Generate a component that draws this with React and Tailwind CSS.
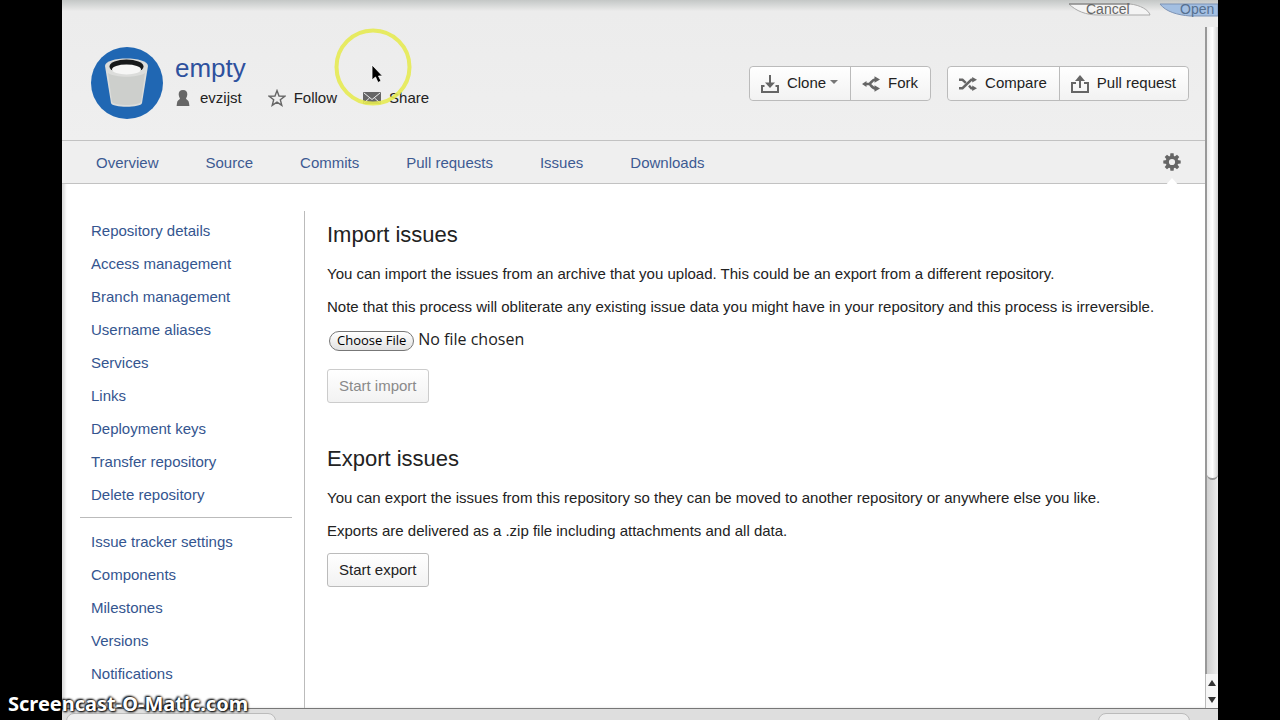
const navLinks = ["Overview", "Source", "Commits", "Pull requests", "Issues", "Downloads"];

const adminLinks = [
  "Repository details",
  "Access management",
  "Branch management",
  "Username aliases",
  "Services",
  "Links",
  "Deployment keys",
  "Transfer repository",
  "Delete repository",
];

const issueLinks = [
  "Issue tracker settings",
  "Components",
  "Milestones",
  "Versions",
  "Notifications",
];

// ─── Icons ─────────────────────────────────────────────────────────────────

function BucketAvatar() {
  return (
    <svg viewBox="0 0 72 72" className="size-[72px] shrink-0" aria-hidden="true">
      <circle cx="36" cy="36" r="36" fill="#2067b3" />
      <path
        d="M14 19 C14 9 57 9 57 19 L51 56 C50 61 21 61 20 56 Z"
        fill="#dcdddb"
      />
      <path d="M17 26 L21 55 C24 59 47 59 50 55 L54 26 C46 31 25 31 17 26 Z" fill="#cdcfcc" />
      <ellipse cx="35.5" cy="19.5" rx="17" ry="7" fill="#17191a" />
      <ellipse cx="35.5" cy="22.5" rx="14.5" ry="5" fill="#f6f6f5" />
    </svg>
  );
}

function UserIcon() {
  return (
    <svg viewBox="0 0 16 18" className="h-[18px] w-4" fill="#666" aria-hidden="true">
      <path d="M8 1 C11 1 12.5 3 12.3 5.5 C12.2 7.5 11.4 8.6 11 9.6 C11.6 11 13.8 11.5 14 14 L14.4 17 H1.6 L2 14 C2.2 11.5 4.4 11 5 9.6 C4.6 8.6 3.8 7.5 3.7 5.5 C3.5 3 5 1 8 1 Z" />
    </svg>
  );
}

function StarIcon() {
  return (
    <svg viewBox="0 0 18 18" className="size-[18px]" fill="none" stroke="#666" strokeWidth="1.4" aria-hidden="true">
      <path d="M9 1.6 L11 7 L16.8 7.2 L12.3 10.8 L13.8 16.4 L9 13.2 L4.2 16.4 L5.7 10.8 L1.2 7.2 L7 7 Z" />
    </svg>
  );
}

function MailIcon() {
  return (
    <svg viewBox="0 0 18 12" className="h-3 w-[18px]" aria-hidden="true">
      <rect width="18" height="12" rx="1" fill="#666" />
      <path d="M1 1 L9 7.5 L17 1 M1 11 L6.5 6 M17 11 L11.5 6" stroke="#eee" strokeWidth="1" fill="none" />
    </svg>
  );
}

function CloneIcon() {
  return (
    <svg viewBox="0 0 18 18" className="size-[18px]" fill="none" stroke="#666" strokeWidth="2" aria-hidden="true">
      <path d="M3.5 11 H1 V17 H17 V11 H14.5 M9 0 V10" />
      <path d="M4 7.5 H14 L9 13 Z" fill="#666" stroke="none" />
    </svg>
  );
}

function ForkIcon() {
  return (
    <svg viewBox="0 0 18 16" className="h-4 w-[18px]" fill="none" stroke="#666" strokeWidth="2.6" aria-hidden="true">
      <path d="M3 8 H7 C9 8 9.5 3.5 14 3.5 M7 8 C9 8 9.5 12.5 14 12.5" />
      <path d="M0 8 L4.5 5 V11 Z M18 3.5 L12.5 0.3 V6.7 Z M18 12.5 L12.5 9.3 V15.7 Z" fill="#666" stroke="none" />
    </svg>
  );
}

function CompareIcon() {
  return (
    <svg viewBox="0 0 18 14" className="h-3.5 w-[18px]" fill="none" stroke="#666" strokeWidth="2.4" aria-hidden="true">
      <path d="M0 2.8 H3.5 L6.8 5.8 M10 8.6 L12.3 11.2 H14 M0 11.2 H3.5 L12.3 2.8 H14" />
      <path d="M18 2.8 L13.2 0 V5.6 Z M18 11.2 L13.2 8.4 V14 Z" fill="#666" stroke="none" />
    </svg>
  );
}

function PullRequestIcon() {
  return (
    <svg viewBox="0 0 18 18" className="size-[18px]" fill="none" stroke="#666" strokeWidth="2" aria-hidden="true">
      <path d="M5 8 H1 V17 H17 V8 H13 M9 4 V13" />
      <path d="M4 6 H14 L9 0 Z" fill="#666" stroke="none" />
    </svg>
  );
}

function GearIcon() {
  const teeth = [0, 45, 90, 135, 180, 225, 270, 315];
  return (
    <svg viewBox="0 0 18 18" className="size-[18px]" aria-hidden="true">
      {teeth.map((angle) => (
        <path key={angle} d="M7 4 L7.4 0.3 H10.6 L11 4 Z" fill="#666" transform={`rotate(${angle} 9 9)`} />
      ))}
      <circle cx="9" cy="9" r="4.7" fill="none" stroke="#666" strokeWidth="3.2" />
    </svg>
  );
}

// ─── Reusable Components ───────────────────────────────────────────────────

function ToolbarButton({ icon, label, caret }) {
  return (
    <button className="flex h-[33px] items-center gap-2 border-l border-[#bbb] bg-linear-to-b from-white to-[#f2f2f2] pr-3 pl-[11px] first:rounded-l first:border-l-0 last:rounded-r">
      {icon}
      {label}
      {caret && <span className="-ml-1 mb-1 border-x-4 border-t-4 border-x-transparent border-t-[#777]" />}
    </button>
  );
}

function ButtonGroup({ children }) {
  return <div className="flex rounded border border-[#bbb]">{children}</div>;
}

function FormButton({ children, disabled }) {
  return (
    <button
      disabled={disabled}
      className="h-[34px] rounded-[3px] border border-[#bbb] bg-linear-to-b from-white to-[#f2f2f2] px-[11px] disabled:border-[#ccc] disabled:text-[#8a8a8a]"
    >
      {children}
    </button>
  );
}

function SideLinks({ links }) {
  return (
    <ul>
      {links.map((link) => (
        <li key={link} className="flex h-[33px] items-center pl-[11px]">
          <a href="#">{link}</a>
        </li>
      ))}
    </ul>
  );
}

// ─── Page Sections ─────────────────────────────────────────────────────────

function Header() {
  return (
    <header className="flex h-[141px] items-start justify-between border-b border-[#c2c2c2] bg-[#efefef] bg-linear-to-b from-[#c4c7c6] via-[#ececec] via-8% to-[#efefef] pr-4 pl-[29px] pt-[47px]">
      <div className="flex gap-3">
        <BucketAvatar />
        <div className="pt-[5px]">
          <h1 className="text-[26px] leading-8 text-[#2e519e]">
            <a href="#">empty</a>
          </h1>
          <div className="flex h-7 items-center gap-[26px]">
            <a href="#" className="flex items-center gap-[9px]"><UserIcon />evzijst</a>
            <a href="#" className="flex items-center gap-2"><StarIcon />Follow</a>
            <a href="#" className="flex items-center gap-2"><MailIcon />Share</a>
          </div>
        </div>
      </div>
      <div className="flex gap-4 pt-[19px]">
        <ButtonGroup>
          <ToolbarButton icon={<CloneIcon />} label="Clone" caret />
          <ToolbarButton icon={<ForkIcon />} label="Fork" />
        </ButtonGroup>
        <ButtonGroup>
          <ToolbarButton icon={<CompareIcon />} label="Compare" />
          <ToolbarButton icon={<PullRequestIcon />} label="Pull request" />
        </ButtonGroup>
      </div>
    </header>
  );
}

function Navbar() {
  return (
    <nav className="flex h-[43px] items-center justify-between border-b border-[#c2c2c2] bg-[#efefef] pr-6 pl-[34px] text-[#3d5a92]">
      <div className="flex gap-[47px] pt-0.5">
        {navLinks.map((link) => (
          <a key={link} href="#">{link}</a>
        ))}
      </div>
      <button aria-label="Settings" className="relative">
        <GearIcon />
        <svg viewBox="0 0 16 9" className="absolute top-[25px] left-px h-[9px] w-4" aria-hidden="true">
          <path d="M0 9 L8 0 L16 9 Z" fill="#fff" />
        </svg>
      </button>
    </nav>
  );
}

function Sidebar() {
  return (
    <aside className="w-[243px] shrink-0 border-r border-[#bbb] pr-3 pl-[18px] text-[#34558f]">
      <div className="pt-1">
        <SideLinks links={adminLinks} />
      </div>
      <hr className="mt-[5px] mb-2 border-[#bbb]" />
      <SideLinks links={issueLinks} />
    </aside>
  );
}

function Content() {
  return (
    <main className="flex-1 pt-2 pl-[22px]">
      <section>
        <h2 className="text-[22px] leading-8">Import issues</h2>
        <p className="mt-[13px] leading-5">
          You can import the issues from an archive that you upload. This could be an export from a different repository.
        </p>
        <p className="mt-[13px] leading-5">
          Note that this process will obliterate any existing issue data you might have in your repository and this process is irreversible.
        </p>
        <input
          type="file"
          aria-label="Issue archive"
          className="mt-3 ml-0.5 block h-6 w-80 font-['Open_Sans',sans-serif] text-base leading-5 file:mr-1 file:h-5 file:rounded-full file:border file:border-[#777] file:bg-linear-to-b file:from-white file:to-[#e2e2e2] file:px-[7px] file:align-middle file:text-[13px] file:leading-[17px] file:text-black"
        />
        <div className="mt-4">
          <FormButton disabled>Start import</FormButton>
        </div>
      </section>
      <section className="mt-10">
        <h2 className="text-[22px] leading-8">Export issues</h2>
        <p className="mt-[13px] leading-5">
          You can export the issues from this repository so they can be moved to another repository or anywhere else you like.
        </p>
        <p className="mt-[13px] mb-3 leading-5">
          Exports are delivered as a .zip file including attachments and all data.
        </p>
        <FormButton>Start export</FormButton>
      </section>
    </main>
  );
}

function Scrollbar() {
  return (
    <div className="flex w-[13px] shrink-0 flex-col bg-[#efefef]" aria-hidden="true">
      <div className="h-[27px] shrink-0 bg-linear-to-b from-[#c4c7c6] to-[#ececec] to-40%" />
      <div className="flex-1 border-l-2 border-[#999] bg-linear-to-r from-[#cfcfcf] to-[#ededed]">
        <div className="h-[70%] rounded-b-full border-b-2 border-[#999] bg-linear-to-r from-[#eee] via-white to-[#d0d0d0]" />
      </div>
      <div className="flex h-[34px] shrink-0 flex-col items-center justify-around border-l border-[#bbb] bg-[#f6f6f6]">
        <span className="border-x-4 border-b-[6px] border-x-transparent border-b-[#333]" />
        <span className="border-x-4 border-t-[6px] border-x-transparent border-t-[#333]" />
      </div>
    </div>
  );
}

// Bottom slivers of the file dialog while it slides away
function ClosingDialog() {
  return (
    <div className="absolute top-0 right-0 overflow-hidden" aria-hidden="true">
      <svg viewBox="0 0 150 18" className="h-[18px] w-[150px]">
        <path d="M1 4 H62 C72 5 81 10 82 15 H30 C18 15 8 11 1 4 Z" fill="#f4f4f4" stroke="#aaa" />
        <path d="M1 4 H62" stroke="#777" />
        <path d="M92 4 H150 V16 H122 C110 15 98 12 92 4 Z" fill="#a3bfe2" stroke="#7d93b5" />
        <text x="18" y="14" fontSize="14" fill="#666">Cancel</text>
        <text x="112" y="14" fontSize="14" fill="#56708f">Open</text>
      </svg>
    </div>
  );
}

function Pointer() {
  return (
    <svg viewBox="0 0 78 78" className="pointer-events-none absolute top-[28px] left-[334px] size-[78px]" aria-hidden="true">
      <circle cx="39" cy="39" r="36.5" fill="none" stroke="#e6ea52" strokeOpacity="0.9" strokeWidth="4" />
      <path d="M38 37 V52 L41.5 49 L44 54.5 L47 53 L44.5 48 H48.5 Z" fill="#000" stroke="#fff" strokeWidth="0.8" />
    </svg>
  );
}

// ─── App ──────────────────────────────────────────────────────────────────

export default function App() {
  return (
    <div className="relative h-screen overflow-hidden bg-black px-[62px] font-['Liberation_Sans',Arial,sans-serif] text-[15px] text-[#222]">
      <div className="relative flex h-full flex-col bg-white">
        <div className="flex min-h-0 flex-1 overflow-hidden">
          <div className="flex min-w-0 flex-1 flex-col shadow-[inset_3px_0_3px_#ddd]">
            <Header />
            <Navbar />
            <div className="flex min-h-0 flex-1 pt-[27px]">
              <Sidebar />
              <Content />
            </div>
          </div>
          <Scrollbar />
        </div>
        <footer className="flex h-3 shrink-0 justify-between overflow-hidden border-t border-[#777] bg-[#dedede] pt-1 pr-7 pl-1">
          <div className="h-5 w-[210px] rounded-t-lg border border-[#bbb] bg-[#eee]" />
          <div className="h-5 w-[92px] rounded-t-lg border border-[#bbb] bg-[#eee]" />
        </footer>
        <ClosingDialog />
      </div>
      <Pointer />
      <div className="absolute bottom-1 left-2 font-['Noto_Sans',sans-serif] text-[20px] leading-6 font-bold text-white [text-shadow:0_0_3px_#000,1px_1px_2px_#000,-1px_-1px_2px_#000]">
        Screencast-O-Matic.com
      </div>
    </div>
  );
}
